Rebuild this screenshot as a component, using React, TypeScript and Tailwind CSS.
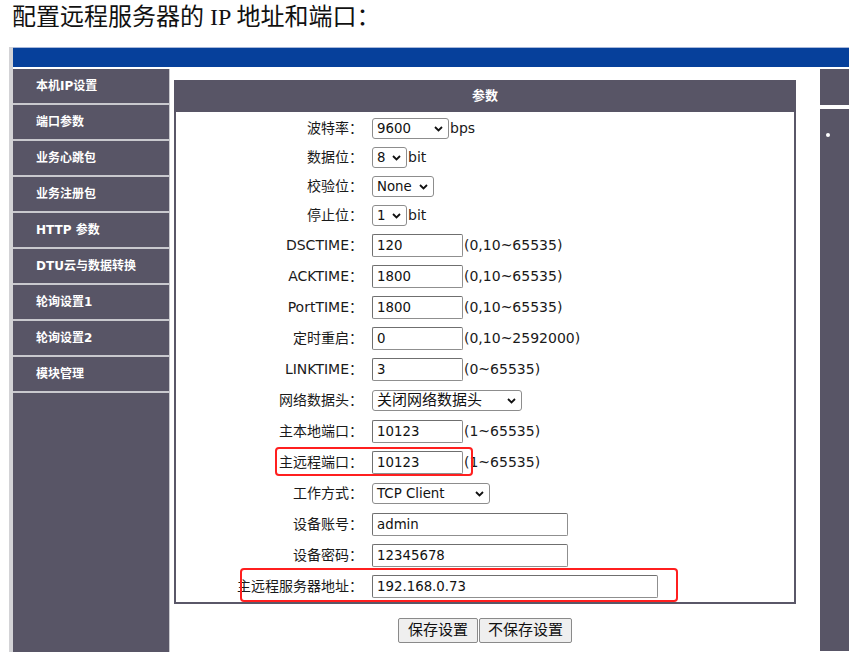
import type { ReactNode } from 'react'

const menu = [
  '本机IP设置',
  '端口参数',
  '业务心跳包',
  '业务注册包',
  'HTTP 参数',
  'DTU云与数据转换',
  '轮询设置1',
  '轮询设置2',
  '模块管理',
]

const formFont = { fontFamily: '"DejaVu Sans", "Noto Sans CJK SC", sans-serif' }

function Chevron() {
  return (
    <svg width="9" height="6" viewBox="0 0 9 6" className="shrink-0">
      <path d="M1 1l3.5 3.5L8 1" fill="none" stroke="#111" strokeWidth="1.8" />
    </svg>
  )
}

function FakeSelect({ value, width, big }: { value: string; width: string; big?: boolean }) {
  return (
    <div
      className={`flex h-[21px] items-center justify-between rounded-[3px] border border-[#8d8d8d] bg-white pl-[4px] pr-[5px] text-[#111] ${width} ${
        big ? 'text-[15px]' : 'text-[13.33px]'
      }`}
    >
      <span className="leading-none">{value}</span>
      <Chevron />
    </div>
  )
}

function TextBox({ value, width }: { value: string; width: string }) {
  return (
    <input
      readOnly
      value={value}
      className={`h-[23px] rounded-[2px] border border-[#8f8f8f] border-t-[#6f6f6f] border-l-[#6f6f6f] bg-white px-[4px] text-[13.33px] text-[#111] outline-none ${width}`}
    />
  )
}

function Row({
  label,
  tall,
  children,
  mark,
}: {
  label: string
  tall?: boolean
  children: ReactNode
  mark?: ReactNode
}) {
  return (
    <div className={`relative flex items-center ${tall ? 'h-[31px]' : 'h-[29px]'}`}>
      <div className="w-[187px] whitespace-nowrap text-right text-[14px] text-[#1a1a1a]">{label}：</div>
      <div className="ml-[9px] flex items-center">{children}</div>
      {mark}
    </div>
  )
}

const Hint = ({ children }: { children: ReactNode }) => (
  <span className="ml-[1px] text-[14px] text-[#1a1a1a]">{children}</span>
)

const Unit = ({ children }: { children: ReactNode }) => (
  <span className="ml-[1px] text-[14px] text-[#1a1a1a]">{children}</span>
)

export default function App() {
  return (
    <div className="h-[656px] overflow-hidden bg-white">
      <h1
        className="pl-[12px] pt-[2px] text-[24px] leading-[30px] text-[#111]"
        style={{ fontFamily: '"Liberation Serif", "Noto Sans CJK SC", serif' }}
      >
        配置远程服务器的 IP 地址和端口：
      </h1>

      <div className="ml-[9px] mt-[15px] w-[840px] border-l-[4px] border-[#d3d3d6]" style={formFont}>
        <div className="h-[20px] border-t border-[#a8b8da] bg-[#06409b]" />

        <div className="mt-[2px] flex h-[583px]">
          {/* left menu */}
          <div className="flex w-[157px] flex-col gap-[2px] border-r border-[#c9c9ce] bg-[#c9c9ce]">
            {menu.map((item) => (
              <div
                key={item}
                className="flex h-[34px] shrink-0 items-center bg-[#585566] pl-[23px] text-[12px] font-bold text-white"
              >
                {item}
              </div>
            ))}
            <div className="flex-1 bg-[#585566]" />
          </div>

          {/* parameter panel */}
          <div className="ml-[4px] mt-[11px] flex w-[622px] flex-col">
            <div className="flex h-[32px] items-center justify-center bg-[#585566] text-[13px] font-bold text-white">
              参数
            </div>
            <div className="border-x-2 border-b-2 border-[#5a5768] pt-[2px]">
              <Row label="波特率">
                <FakeSelect value="9600" width="w-[77px]" />
                <Unit>bps</Unit>
              </Row>
              <Row label="数据位">
                <FakeSelect value="8" width="w-[35px]" />
                <Unit>bit</Unit>
              </Row>
              <Row label="校验位">
                <FakeSelect value="None" width="w-[62px]" />
              </Row>
              <Row label="停止位">
                <FakeSelect value="1" width="w-[35px]" />
                <Unit>bit</Unit>
              </Row>
              <Row label="DSCTIME" tall>
                <TextBox value="120" width="w-[91px]" />
                <Hint>(0,10~65535)</Hint>
              </Row>
              <Row label="ACKTIME" tall>
                <TextBox value="1800" width="w-[91px]" />
                <Hint>(0,10~65535)</Hint>
              </Row>
              <Row label="PortTIME" tall>
                <TextBox value="1800" width="w-[91px]" />
                <Hint>(0,10~65535)</Hint>
              </Row>
              <Row label="定时重启" tall>
                <TextBox value="0" width="w-[91px]" />
                <Hint>(0,10~2592000)</Hint>
              </Row>
              <Row label="LINKTIME" tall>
                <TextBox value="3" width="w-[91px]" />
                <Hint>(0~65535)</Hint>
              </Row>
              <Row label="网络数据头" tall>
                <FakeSelect value="关闭网络数据头" width="w-[150px]" big />
              </Row>
              <Row label="主本地端口" tall>
                <TextBox value="10123" width="w-[91px]" />
                <Hint>(1~65535)</Hint>
              </Row>
              <Row
                label="主远程端口"
                tall
                mark={
                  <div className="pointer-events-none absolute left-[99px] top-0 h-[29px] w-[198px] rounded-[4px] border-2 border-[#ff1f1f]" />
                }
              >
                <TextBox value="10123" width="w-[91px]" />
                <Hint>(1~65535)</Hint>
              </Row>
              <Row label="工作方式" tall>
                <FakeSelect value="TCP Client" width="w-[118px]" />
              </Row>
              <Row label="设备账号" tall>
                <TextBox value="admin" width="w-[196px]" />
              </Row>
              <Row label="设备密码" tall>
                <TextBox value="12345678" width="w-[196px]" />
              </Row>
              <Row
                label="主远程服务器地址"
                tall
                mark={
                  <div className="pointer-events-none absolute left-[64px] top-[-3px] h-[34px] w-[438px] rounded-[4px] border-2 border-[#ff1f1f]" />
                }
              >
                <TextBox value="192.168.0.73" width="w-[286px]" />
              </Row>
            </div>

            <div className="mt-[14px] flex justify-center gap-[1px]">
              <button className="h-[25px] w-[80px] rounded-[2px] border border-[#8a8a8a] bg-[#efefef] text-[15px] text-[#111]">
                保存设置
              </button>
              <button className="h-[25px] w-[93px] rounded-[2px] border border-[#8a8a8a] bg-[#efefef] text-[15px] text-[#111]">
                不保存设置
              </button>
            </div>
          </div>

          {/* right strip */}
          <div className="ml-[24px] flex w-[29px] flex-col gap-[4px]">
            <div className="h-[36px] bg-[#585566]" />
            <div className="h-[542px] bg-[#585566] pl-[6px] pt-[24px]">
              <div className="h-[4px] w-[4px] rounded-full bg-white" />
            </div>
          </div>
        </div>
      </div>
    </div>
  )
}
